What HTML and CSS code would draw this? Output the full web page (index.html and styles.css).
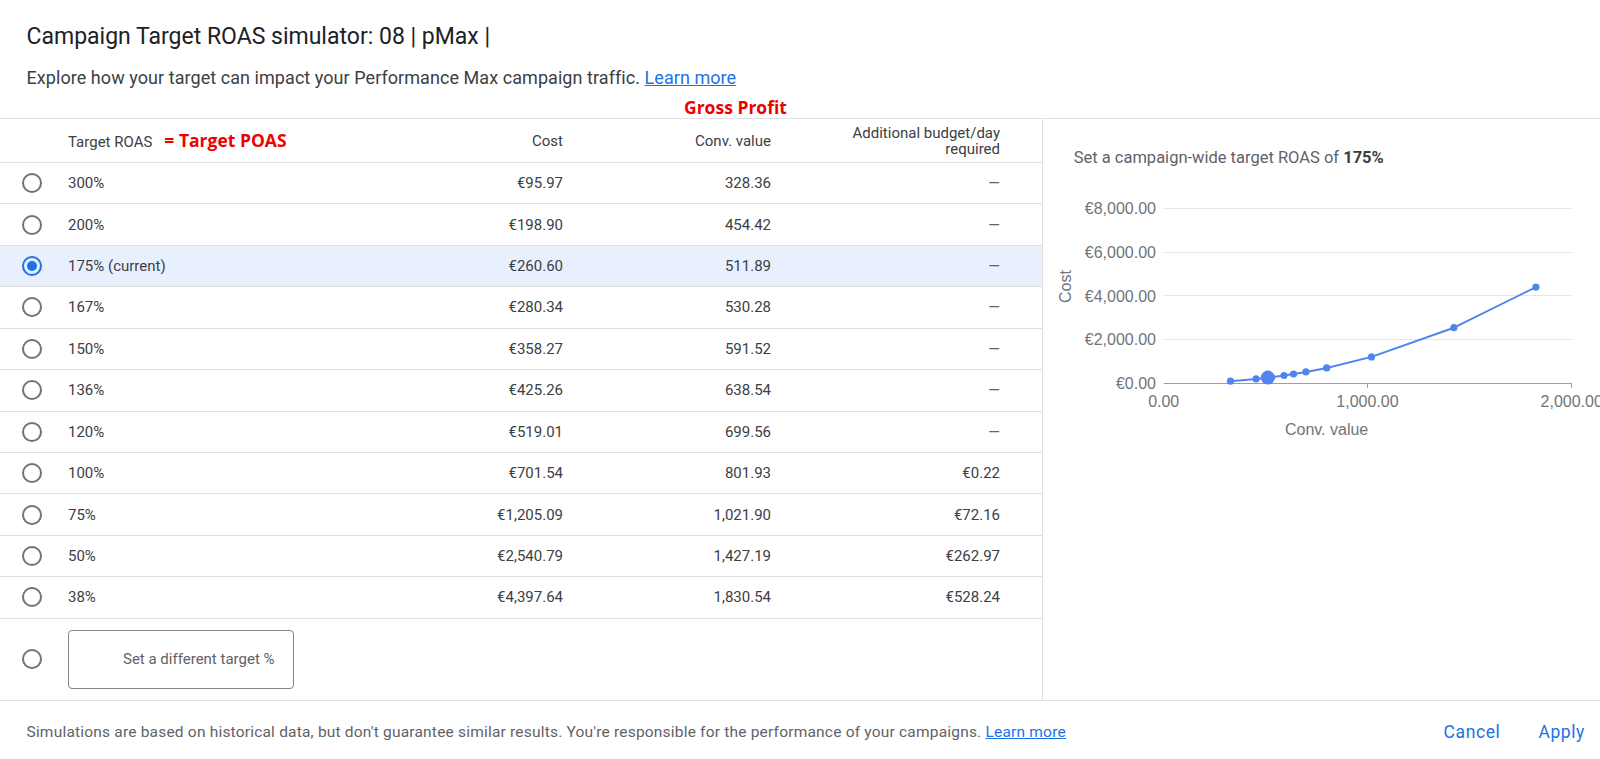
FILE: index.html
```html
<!DOCTYPE html>
<html lang="en">
<head>
<meta charset="utf-8">
<title>Campaign Target ROAS simulator</title>
<link rel="stylesheet" href="styles.css">
</head>
<body>
<div class="page">
  <header class="head">
    <h1 class="title">Campaign Target ROAS simulator: 08 | pMax |</h1>
    <p class="subtitle">Explore how your target can impact your Performance Max campaign traffic. <a class="link" href="#">Learn more</a></p>
    <div class="note note-gross">Gross Profit</div>
  </header>

  <main class="main">
    <section class="table">
      <div class="row row-head">
        <div></div>
        <div class="label">Target ROAS<span class="note note-inline">= Target POAS</span></div>
        <div class="num">Cost</div>
        <div class="num">Conv. value</div>
        <div class="num">Additional budget/day<br>required</div>
      </div>
      <div class="row"><div><span class="radio"></span></div><div class="label">300%</div><div class="num">€95.97</div><div class="num">328.36</div><div class="num dash">—</div></div>
      <div class="row"><div><span class="radio"></span></div><div class="label">200%</div><div class="num">€198.90</div><div class="num">454.42</div><div class="num dash">—</div></div>
      <div class="row selected"><div><span class="radio on"></span></div><div class="label">175% (current)</div><div class="num">€260.60</div><div class="num">511.89</div><div class="num dash">—</div></div>
      <div class="row"><div><span class="radio"></span></div><div class="label">167%</div><div class="num">€280.34</div><div class="num">530.28</div><div class="num dash">—</div></div>
      <div class="row"><div><span class="radio"></span></div><div class="label">150%</div><div class="num">€358.27</div><div class="num">591.52</div><div class="num dash">—</div></div>
      <div class="row"><div><span class="radio"></span></div><div class="label">136%</div><div class="num">€425.26</div><div class="num">638.54</div><div class="num dash">—</div></div>
      <div class="row"><div><span class="radio"></span></div><div class="label">120%</div><div class="num">€519.01</div><div class="num">699.56</div><div class="num dash">—</div></div>
      <div class="row"><div><span class="radio"></span></div><div class="label">100%</div><div class="num">€701.54</div><div class="num">801.93</div><div class="num">€0.22</div></div>
      <div class="row"><div><span class="radio"></span></div><div class="label">75%</div><div class="num">€1,205.09</div><div class="num">1,021.90</div><div class="num">€72.16</div></div>
      <div class="row"><div><span class="radio"></span></div><div class="label">50%</div><div class="num">€2,540.79</div><div class="num">1,427.19</div><div class="num">€262.97</div></div>
      <div class="row"><div><span class="radio"></span></div><div class="label">38%</div><div class="num">€4,397.64</div><div class="num">1,830.54</div><div class="num">€528.24</div></div>
      <div class="row-custom">
        <div class="radio-cell"><span class="radio"></span></div>
        <div class="custom-box">Set a different target %</div>
      </div>
    </section>

    <section class="chart-panel">
      <p class="chart-title">Set a campaign-wide target ROAS of <b>175%</b></p>
      <svg class="chart" viewBox="1043 180 557 280" xmlns="http://www.w3.org/2000/svg">
        <g class="grid">
          <line x1="1163.7" y1="208.5" x2="1571.7" y2="208.5"/>
          <line x1="1163.7" y1="252.5" x2="1571.7" y2="252.5"/>
          <line x1="1163.7" y1="295.5" x2="1571.7" y2="295.5"/>
          <line x1="1163.7" y1="339.5" x2="1571.7" y2="339.5"/>
        </g>
        <g class="axis">
          <line x1="1163.7" y1="383.5" x2="1571.7" y2="383.5"/>
          <line x1="1367.5" y1="383.5" x2="1367.5" y2="388"/>
          <line x1="1571.5" y1="383.5" x2="1571.5" y2="388"/>
        </g>
        <g class="ylabels">
          <text x="1156" y="214.3">€8,000.00</text>
          <text x="1156" y="258">€6,000.00</text>
          <text x="1156" y="301.6">€4,000.00</text>
          <text x="1156" y="345.3">€2,000.00</text>
          <text x="1156" y="389">€0.00</text>
        </g>
        <g class="xlabels">
          <text x="1163.7" y="406.7">0.00</text>
          <text x="1367.5" y="406.7">1,000.00</text>
          <text x="1571.7" y="406.7">2,000.00</text>
        </g>
        <text class="axis-title" x="1070.5" y="286.5" transform="rotate(-90 1070.5 286.5)">Cost</text>
        <text class="axis-title" x="1326.6" y="435">Conv. value</text>
        <polyline class="series" points="1230.5,381.2 1256.1,378.95 1267.8,377.6 1271.5,377.2 1284.0,375.5 1293.5,374.0 1305.9,371.95 1326.7,367.95 1371.5,356.9 1453.9,327.7 1535.9,287.1"/>
        <g class="dots">
          <circle cx="1230.5" cy="381.2" r="3.6"/>
          <circle cx="1256.1" cy="378.95" r="3.6"/>
          <circle cx="1271.5" cy="377.2" r="3.6"/>
          <circle cx="1284.0" cy="375.5" r="3.6"/>
          <circle cx="1293.5" cy="374.0" r="3.6"/>
          <circle cx="1305.9" cy="371.95" r="3.6"/>
          <circle cx="1326.7" cy="367.95" r="3.6"/>
          <circle cx="1371.5" cy="356.9" r="3.6"/>
          <circle cx="1453.9" cy="327.7" r="3.6"/>
          <circle cx="1535.9" cy="287.1" r="3.6"/>
          <circle cx="1267.8" cy="377.6" r="7"/>
        </g>
      </svg>
    </section>
  </main>

  <footer class="foot">
    <p class="disclaimer">Simulations are based on historical data, but don't guarantee similar results. You're responsible for the performance of your campaigns. <a class="link" href="#">Learn more</a></p>
    <div class="actions">
      <span class="btn">Cancel</span>
      <span class="btn">Apply</span>
    </div>
  </footer>
</div>
</body>
</html>
```

FILE: styles.css
```css
* {
  box-sizing: border-box;
}

html,
body {
  margin: 0;
  padding: 0;
}

body {
  width: 1600px;
  height: 759px;
  overflow: hidden;
  background: #ffffff;
  font-family: Roboto, "Liberation Sans", Arial, sans-serif;
  color: #3c4043;
}

.page {
  width: 1600px;
  height: 759px;
  display: flex;
  flex-direction: column;
}

/* ---------- header ---------- */
.head {
  height: 118px;
  padding: 23px 0 0 26.5px;
}

.title {
  margin: 0;
  font-size: 23px;
  line-height: 28px;
  font-weight: 400;
  color: #202124;
}

.subtitle {
  margin: 15px 0 0;
  font-size: 18px;
  letter-spacing: 0.06px;
  line-height: 24px;
  color: #3c4043;
}

.link {
  color: #1a73e8;
  text-decoration: underline;
}

.note {
  font-family: "Open Sans", "Noto Sans", sans-serif;
  font-weight: 700;
  font-size: 17.5px;
  color: #ee0000;
}

.note-gross {
  margin: 6px 0 0 657.5px;
  line-height: 22px;
}

.note-inline {
  margin-left: 12px;
}

/* ---------- main ---------- */
.main {
  height: 583px;
  display: flex;
  border-top: 1px solid #e0e0e0;
  border-bottom: 1px solid #e0e0e0;
}

.table {
  width: 1043px;
  flex: none;
  border-right: 1px solid #e0e0e0;
  display: flex;
  flex-direction: column;
}

.row {
  display: grid;
  grid-template-columns: 68px 295px 200px 208px 229px;
  align-items: center;
  padding-right: 42px;
  height: 41.43px;
  flex: none;
  border-bottom: 1px solid #e0e0e0;
  font-size: 15px;
  line-height: 20px;
  color: #3c4043;
}

.row-head {
  height: 44px;
  line-height: 16px;
}

.row.selected {
  background: #e8f0fe;
}

.row > div:first-child {
  display: flex;
  align-items: center;
}

.num {
  text-align: right;
}

.dash {
  color: #5f6368;
}

.radio {
  display: flex;
  align-items: center;
  justify-content: center;
  width: 20px;
  height: 20px;
  margin-left: 22px;
  border: 2px solid #6f7378;
  border-radius: 50%;
}

.radio.on {
  border-color: #1a73e8;
}

.radio.on::after {
  content: "";
  width: 10px;
  height: 10px;
  border-radius: 50%;
  background: #1a73e8;
}

.row-custom {
  flex: 1;
  display: flex;
  align-items: center;
}

.radio-cell {
  width: 68px;
  display: flex;
  align-items: center;
}

.custom-box {
  width: 226px;
  height: 59px;
  display: flex;
  align-items: center;
  padding-left: 54px;
  border: 1px solid #80868b;
  border-radius: 4px;
  font-size: 15px;
  color: #5f6368;
}

/* ---------- chart ---------- */
.chart-panel {
  flex: 1;
  display: flex;
  flex-direction: column;
  min-width: 0;
}

.chart-title {
  margin: 29.4px 0 11.6px 30.7px;
  font-size: 16.5px;
  line-height: 20px;
  color: #5f6368;
}

.chart-title b {
  font-weight: 700;
  color: #3c4043;
}

.chart {
  display: block;
  width: 557px;
  height: 280px;
}

.grid line {
  stroke: #e6e6e6;
  stroke-width: 1;
}

.axis line {
  stroke: #9e9e9e;
  stroke-width: 1;
}

.ylabels text,
.xlabels text,
.axis-title {
  font-family: "Liberation Sans", Arial, sans-serif;
  font-size: 16px;
  fill: #70757a;
}

.ylabels text {
  text-anchor: end;
}

.xlabels text,
.axis-title {
  text-anchor: middle;
}

.series {
  fill: none;
  stroke: #5284ef;
  stroke-width: 2;
  stroke-linejoin: round;
}

.dots circle {
  fill: #5284ef;
}

/* ---------- footer ---------- */
.foot {
  height: 58px;
  flex: none;
  display: flex;
  align-items: center;
  justify-content: space-between;
  padding: 3px 15px 0 26.5px;
}

.disclaimer {
  margin: 0;
  font-size: 15.5px;
  letter-spacing: 0.2px;
  line-height: 20px;
  color: #5f6368;
}

.actions {
  display: flex;
  gap: 38px;
}

.btn {
  font-size: 17.5px;
  line-height: 20px;
  font-weight: 400;
  letter-spacing: 0.6px;
  color: #1a73e8;
}
```
